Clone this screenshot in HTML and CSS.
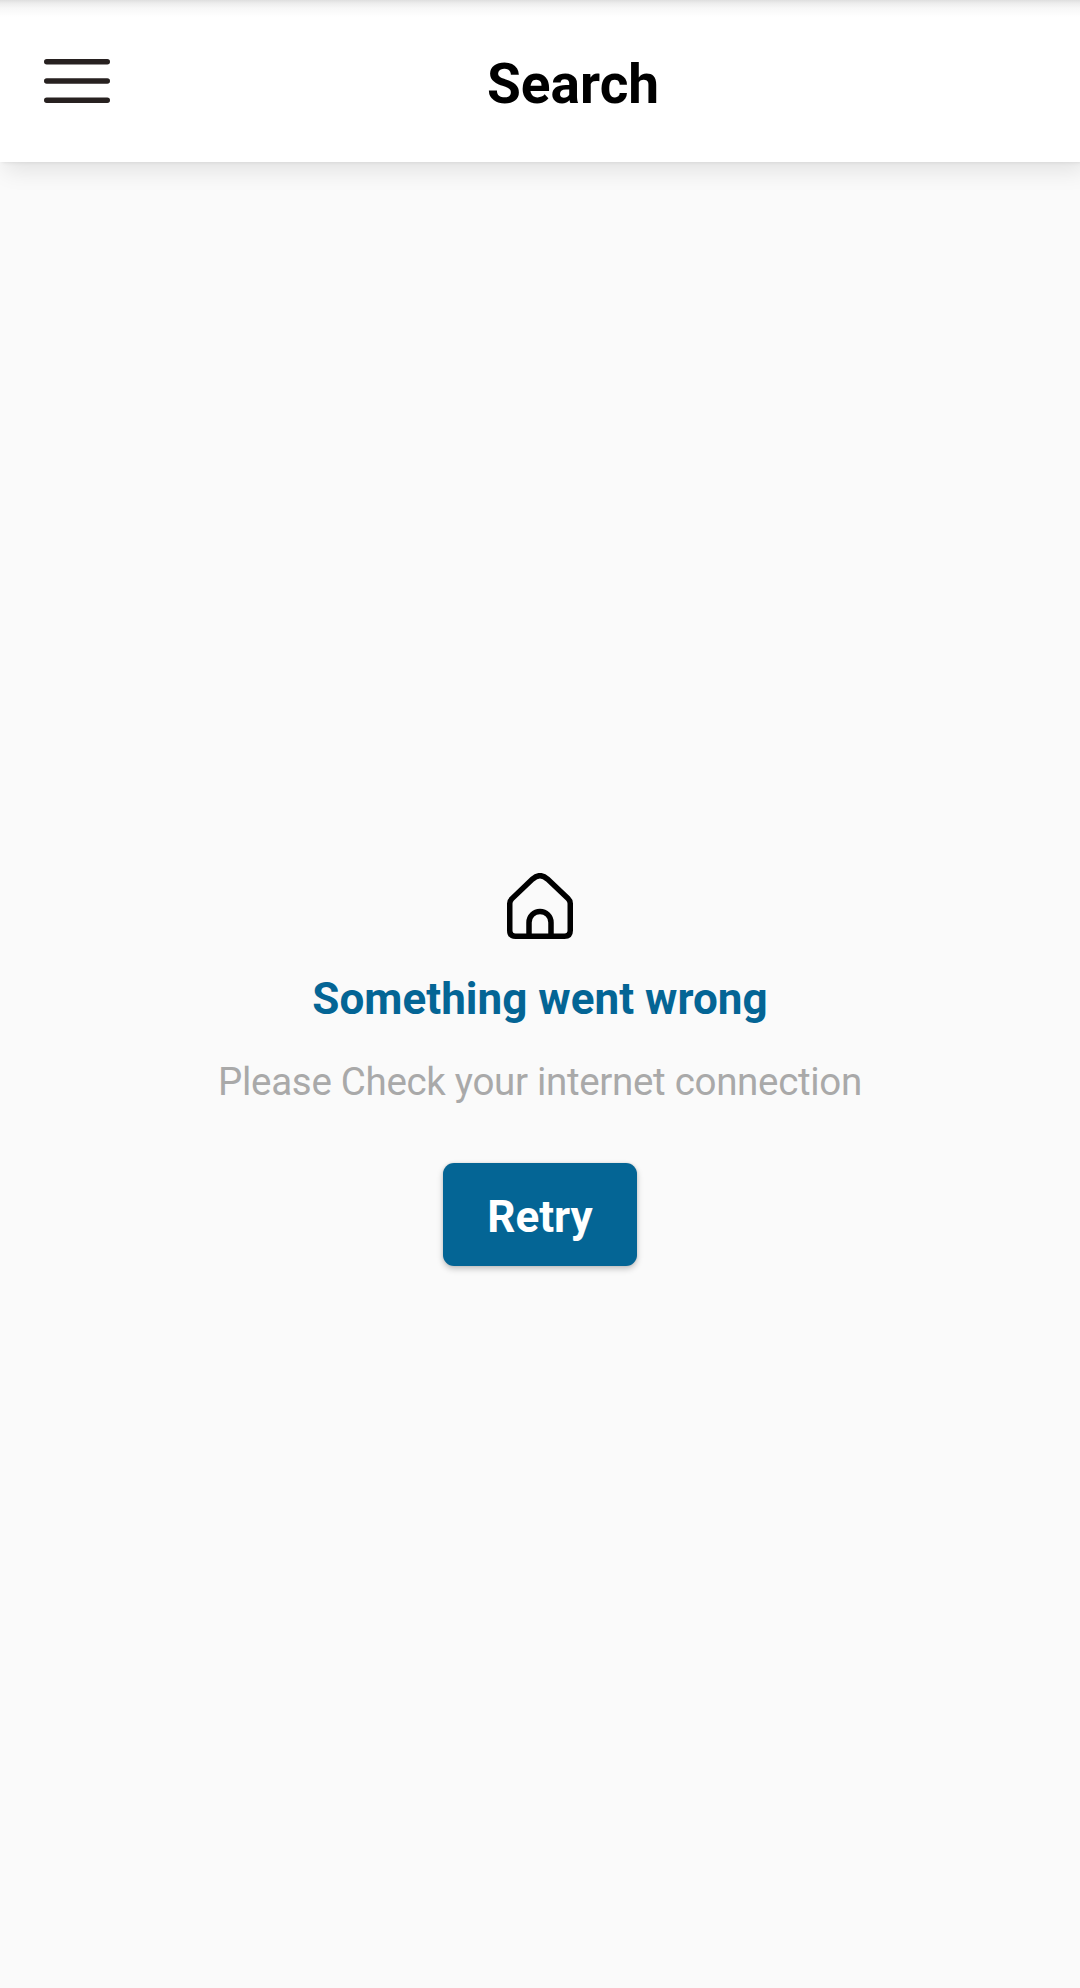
FILE: index.html
```html
<!DOCTYPE html>
<html lang="en">
<head>
<meta charset="utf-8">
<title>Search</title>
<link rel="stylesheet" href="styles.css">
</head>
<body>
<header class="header">
  <button class="menu" aria-label="Menu">
    <svg width="66" height="44" viewBox="0 0 66 44" fill="none" stroke="#272120" stroke-width="5.5" stroke-linecap="round"><path d="M2.75 2.75h60.5M2.75 22h60.5M2.75 41.25h60.5"/></svg>
  </button>
  <h1 class="title">Search</h1>
</header>
<main class="content">
  <svg class="home" width="66" height="66" viewBox="0 0 66 66" fill="none" stroke="#000" stroke-width="5.5"><path d="M2.75 57.5V30.5Q2.75 27.8 5 25.6L25.5 6.1Q33-.6 40.5 6.1L61 25.6Q63.25 27.8 63.25 30.5V57.5Q63.25 63.25 57.5 63.25H8.5Q2.75 63.25 2.75 57.5Z"/><path d="M22 63.25V49.4a11 11 0 0 1 22 0V63.25"/></svg>
  <h2 class="heading">Something went wrong</h2>
  <p class="message">Please Check your internet connection</p>
  <button class="retry">Retry</button>
</main>
</body>
</html>
```
FILE: styles.css
```css
* {
  box-sizing: border-box;
}

body {
  margin: 0;
  height: 1988px;
  display: flex;
  flex-direction: column;
  overflow: hidden;
  background: #fafafa;
  font-family: Roboto, sans-serif;
}

button {
  border: 0;
  font-family: inherit;
}

.header {
  flex: none;
  height: 162px;
  display: flex;
  align-items: center;
  padding-left: 44px;
  background: linear-gradient(#dedede, #ececec 3px, #f7f7f7 8px, #fff 17px);
  box-shadow: 5px 8px 22px rgba(0, 0, 0, 0.1), 2px 0 4px rgba(0, 0, 0, 0.1);
}

.menu {
  display: flex;
  padding: 0;
  background: none;
}

.title {
  margin: 5px 0 0 377px;
  font-size: 55px;
  font-weight: 700;
  line-height: 64px;
}

.content {
  display: flex;
  flex-direction: column;
  align-items: center;
  padding-top: 711px;
}

.heading {
  margin: 34px 0 0;
  color: #046595;
  font-size: 44px;
  font-weight: 700;
  line-height: 52px;
  letter-spacing: 0.03px;
}

.message {
  margin: 34px 0 0;
  color: #a9a9a9;
  font-size: 38.5px;
  line-height: 46px;
  letter-spacing: -0.31px;
}

.retry {
  width: 194px;
  height: 103px;
  margin-top: 58px;
  padding: 5px 0 0;
  border-radius: 11px;
  background: #046595;
  box-shadow: 0 3px 6px rgba(0, 0, 0, 0.22), 0 0 3px rgba(0, 0, 0, 0.1);
  color: #fff;
  font-size: 44px;
  font-weight: 700;
  line-height: 52px;
}
```
